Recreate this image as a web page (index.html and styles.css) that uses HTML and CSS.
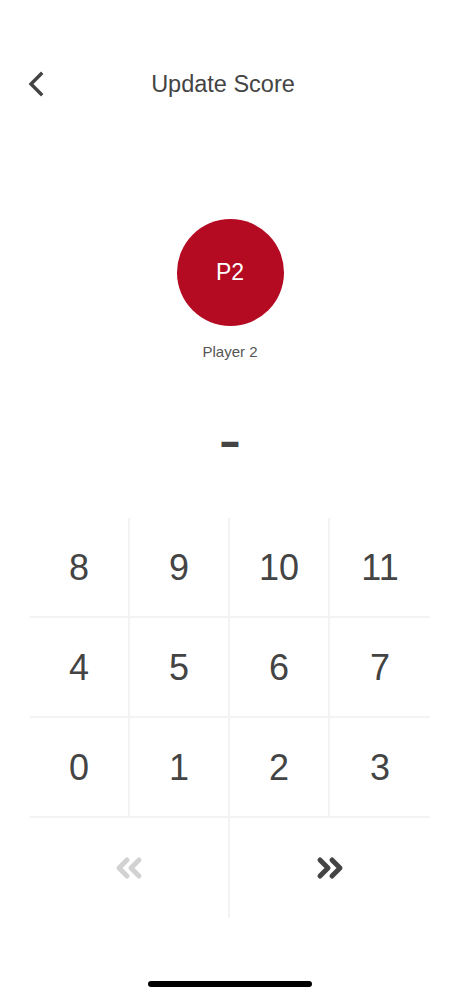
FILE: index.html
```html
<!DOCTYPE html>
<html lang="en">
<head>
  <meta charset="UTF-8">
  <meta name="viewport" content="width=device-width, initial-scale=1.0">
  <title>Update Score</title>
  <link rel="stylesheet" href="styles.css">
</head>
<body>
<div id="screen">
  <div class="header">
    <button class="back" type="button">
      <svg width="18" height="26" viewBox="0 0 18 26">
        <polyline points="15,3 5,13 15,23" fill="none" stroke="#444" stroke-width="3.4" stroke-linecap="square" stroke-linejoin="miter"/>
      </svg>
    </button>
    <h1 class="title">Update Score</h1>
  </div>

  <div class="player">
    <div class="avatar">P2</div>
    <p class="player-name">Player 2</p>
  </div>

  <div class="score"><span>&ndash;</span></div>

  <div class="keypad">
    <button class="key" type="button">8</button>
    <button class="key" type="button">9</button>
    <button class="key" type="button">10</button>
    <button class="key last" type="button">11</button>
    <button class="key" type="button">4</button>
    <button class="key" type="button">5</button>
    <button class="key" type="button">6</button>
    <button class="key last" type="button">7</button>
    <button class="key" type="button">0</button>
    <button class="key" type="button">1</button>
    <button class="key" type="button">2</button>
    <button class="key last" type="button">3</button>
    <button class="nav prev" type="button">
      <svg width="30" height="24" viewBox="0 0 30 24">
        <polyline points="13,4 5,12 13,20" fill="none" stroke="#d2d2d2" stroke-width="5" stroke-linecap="round" stroke-linejoin="round"/>
        <polyline points="25,4 17,12 25,20" fill="none" stroke="#d2d2d2" stroke-width="5" stroke-linecap="round" stroke-linejoin="round"/>
      </svg>
    </button>
    <button class="nav next" type="button">
      <svg width="30" height="24" viewBox="0 0 30 24">
        <polyline points="5,4 13,12 5,20" fill="none" stroke="#444" stroke-width="5" stroke-linecap="round" stroke-linejoin="round"/>
        <polyline points="17,4 25,12 17,20" fill="none" stroke="#444" stroke-width="5" stroke-linecap="round" stroke-linejoin="round"/>
      </svg>
    </button>
  </div>

  <div class="home-indicator"></div>
</div>
</body>
</html>
```

FILE: styles.css
```css
body {
  margin: 0;
  background: #fff;
  font-family: "Liberation Sans", Arial, sans-serif;
  color: #444;
}

#screen {
  position: relative;
  width: 460px;
  height: 996px;
  overflow: hidden;
}

button {
  font-family: inherit;
  background: none;
  border: none;
  padding: 0;
  cursor: pointer;
}

.header {
  display: flex;
  align-items: center;
  height: 48px;
  padding-top: 60px;
  padding-right: 70px;
}

.back {
  width: 56px;
  height: 48px;
  padding-left: 26px;
  display: flex;
  align-items: center;
}

.title {
  flex: 1;
  margin: 0;
  text-align: center;
  font-size: 23.5px;
  font-weight: normal;
  line-height: 48px;
  color: #444;
}

.player {
  display: flex;
  flex-direction: column;
  align-items: center;
  margin-top: 111px;
}

.avatar {
  width: 107px;
  height: 107px;
  border-radius: 50%;
  background: #b40a22;
  color: #fff;
  font-size: 23px;
  display: flex;
  align-items: center;
  justify-content: center;
}

.player-name {
  margin: 17px 0 0;
  font-size: 15px;
  line-height: 18px;
  color: #555;
}

.score {
  margin-top: 54px;
  height: 52px;
  line-height: 50px;
  text-align: center;
  font-size: 34px;
  font-weight: bold;
  color: #444;
}

.score span {
  display: inline-block;
  transform: scaleY(1.5);
}

.keypad {
  display: grid;
  grid-template-columns: repeat(4, 100px);
  grid-auto-rows: 100px;
  margin: 51px 30px 0;
}

.key {
  font-size: 36px;
  padding-top: 2px;
  color: #444;
  border-right: 2px solid #f3f3f3;
  border-bottom: 2px solid #f3f3f3;
}

.key.last {
  border-right: none;
}

.nav {
  grid-column: span 2;
  display: flex;
  align-items: center;
  justify-content: center;
}

.nav.prev {
  border-right: 2px solid #f3f3f3;
}

.home-indicator {
  position: absolute;
  left: 148px;
  bottom: 9px;
  width: 164px;
  height: 6px;
  border-radius: 3px;
  background: #000;
}
```
